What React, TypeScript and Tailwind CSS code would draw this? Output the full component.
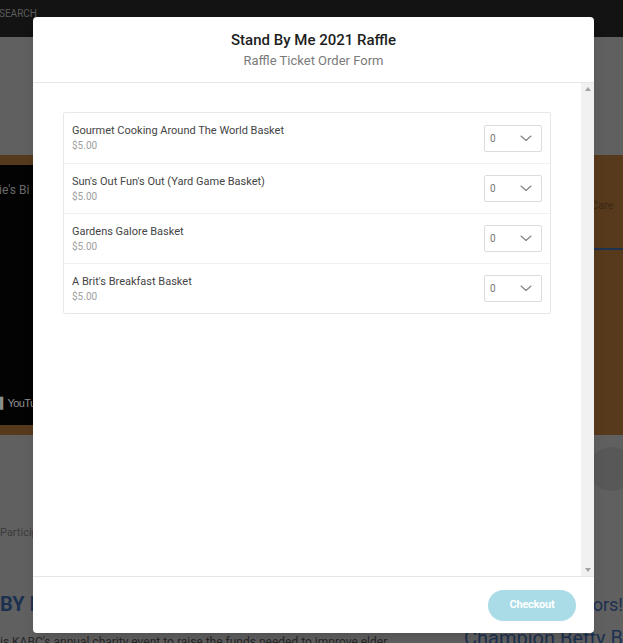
import React from 'react';

const items = [
  { id: 1, name: 'Gourmet Cooking Around The World Basket', price: '$5.00' },
  { id: 2, name: "Sun's Out Fun's Out (Yard Game Basket)", price: '$5.00' },
  { id: 3, name: 'Gardens Galore Basket', price: '$5.00' },
  { id: 4, name: "A Brit's Breakfast Basket", price: '$5.00' },
];

const Chevron = () => (
  <svg width="12" height="7" viewBox="0 0 12 7" fill="none">
    <path d="M1 1l5 4.5L11 1" stroke="#808080" strokeWidth="1.1" strokeLinecap="round" strokeLinejoin="round" />
  </svg>
);

const Background = () => (
  <div className="relative w-[623px] h-[643px] overflow-hidden font-['Roboto',sans-serif]">
    <div className="h-[37px] bg-[#131313] flex items-center">
      <span className="text-[10px] text-[#5c5c5c] -ml-[1px] -mt-[10px]">SEARCH</span>
    </div>
    <div className="h-[118px] bg-[#606060]" />
    <div className="h-[280px] bg-[#573a1c] flex justify-between">
      <div className="w-[40px] mt-[10px] h-[260px] bg-[#030303] flex flex-col justify-between overflow-hidden">
        <span className="text-[12px] text-[#6a6a6a] whitespace-nowrap -ml-[1px] mt-[16px]">ie's Bi</span>
        <span className="text-[11px] text-[#8f8f8f] whitespace-nowrap tracking-tighter font-['Liberation_Sans_Narrow','Liberation_Sans',sans-serif] pb-[14px]">▍YouTube</span>
      </div>
      <div className="w-[43px] flex flex-col">
        <span className="text-[11px] text-[#3a2814] whitespace-nowrap mt-[43px] pl-[11px]">Care</span>
        <div className="mt-[33px] h-[2px] bg-[#1d3350]" />
      </div>
    </div>
    <div className="h-[208px] bg-[#606060] flex flex-col">
      <div className="flex justify-end pt-[12px]">
        <div className="w-[44px] h-[44px] rounded-full bg-[#585858] -mr-[10px]" />
      </div>
      <span className="text-[11px] text-[#3c3c3c] mt-[34px]">Particip</span>
      <div className="flex justify-between items-end mt-[52px]">
        <span className="text-[20px] font-bold text-[#1c3150] leading-none">BY I</span>
        <span className="text-[18px] text-[#1c3150] leading-none">ors!</span>
      </div>
      <div className="flex justify-between items-end mt-[14px]">
        <span className="text-[12px] text-[#262626] whitespace-nowrap leading-none">is KABC's annual charity event to raise the funds needed to improve elder</span>
        <span className="text-[20px] text-[#1c3150] whitespace-nowrap leading-none">Champion Betty B</span>
      </div>
    </div>
  </div>
);

const App: React.FC = () => {
  return (
    <div className="relative w-[623px] h-[643px] overflow-hidden">
      <Background />
      <div className="absolute left-[33px] top-[17px] w-[561px] h-[616px] bg-white rounded-[4px] shadow-lg flex flex-col font-['Roboto',sans-serif]">
        <div className="h-[66px] border-b border-[#e6e6e6] flex flex-col items-center pt-[14px] flex-shrink-0">
          <h1 className="text-[15px] font-medium text-[#1e1e1e] leading-[18px]">Stand By Me 2021 Raffle</h1>
          <p className="text-[13px] text-[#7b7b7b] leading-[16px] mt-[4px]">Raffle Ticket Order Form</p>
        </div>

        <div className="flex-grow flex min-h-0">
          <div className="flex-grow pl-[30px] pr-[30px] pt-[29px]">
            <div className="border border-[#e8e8e8] rounded-[2px]">
              {items.map((item, i) => (
                <div
                  key={item.id}
                  className={`h-[50px] flex items-center justify-between pl-[8px] pr-[8px] ${i > 0 ? 'border-t border-[#f0f0f0]' : ''}`}
                >
                  <div className="flex flex-col">
                    <span className="text-[11px] text-[#444] leading-[15px]">{item.name}</span>
                    <span className="text-[10px] text-[#a0a0a0] leading-[14px] mt-[1px]">{item.price}</span>
                  </div>
                  <div className="w-[58px] h-[27px] border border-[#dcdcdc] rounded-[2px] flex items-center justify-between pl-[5px] pr-[9px]">
                    <span className="text-[10px] text-[#777]">0</span>
                    <Chevron />
                  </div>
                </div>
              ))}
            </div>
          </div>
          <div className="w-[13px] bg-[#f1f1f1] flex flex-col justify-between items-center py-[4px] flex-shrink-0">
            <span className="w-0 h-0 border-l-[3px] border-r-[3px] border-b-[4px] border-l-transparent border-r-transparent border-b-[#a3a3a3]" />
            <span className="w-0 h-0 border-l-[3px] border-r-[3px] border-t-[4px] border-l-transparent border-r-transparent border-t-[#a3a3a3]" />
          </div>
        </div>

        <div className="h-[57px] border-t border-[#e6e6e6] flex items-center justify-end pr-[18px] flex-shrink-0">
          <button
            disabled
            className="w-[88px] h-[31px] rounded-full bg-[#a9dce7] text-white text-[11px] font-bold tracking-tight"
          >
            Checkout
          </button>
        </div>
      </div>
    </div>
  );
};

export default App;
